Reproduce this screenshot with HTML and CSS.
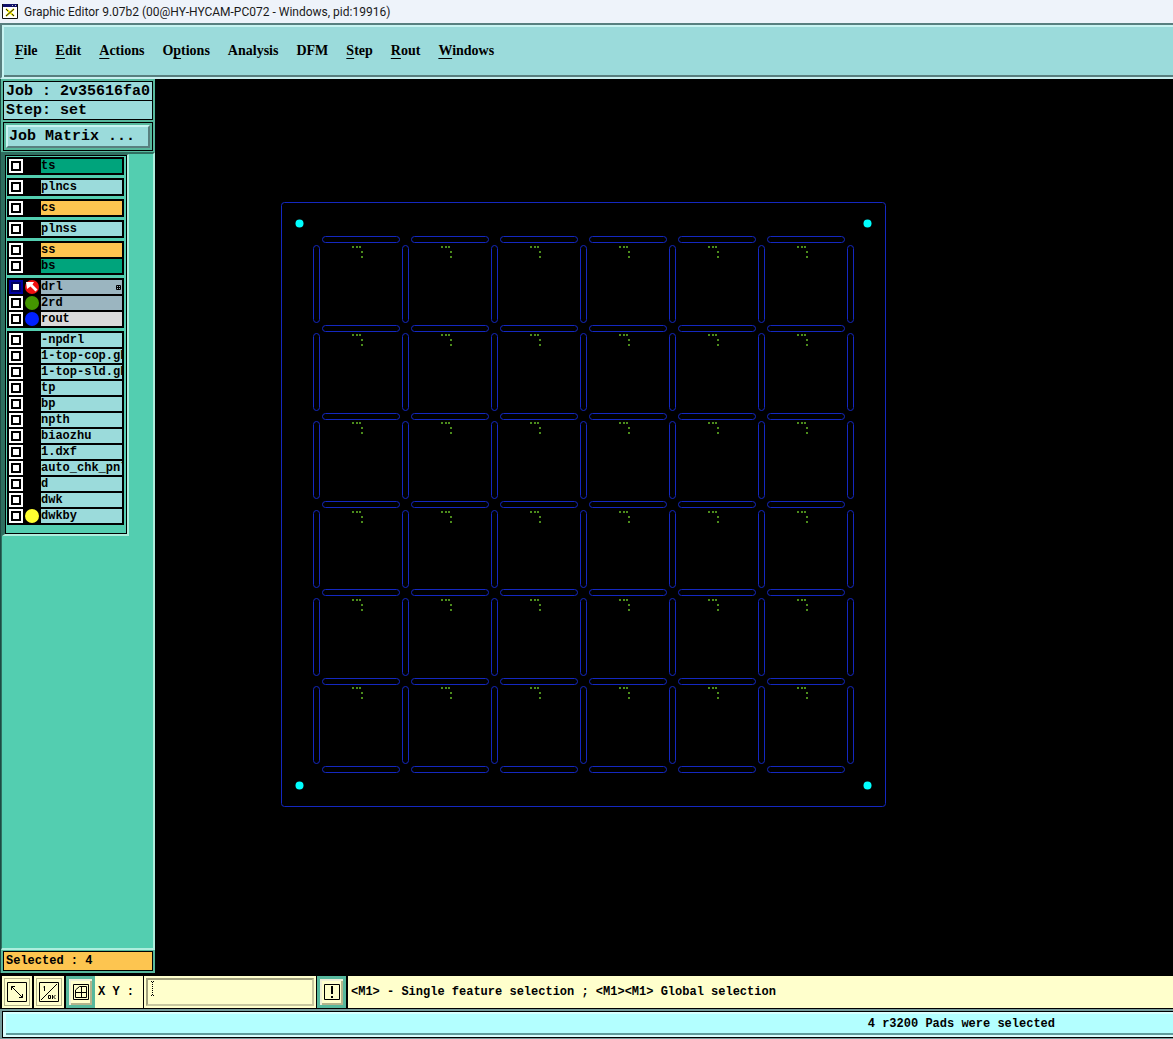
FILE: index.html
```html
<!DOCTYPE html>
<html lang="en">
<head>
<meta charset="utf-8">
<title>Graphic Editor 9.07b2</title>
<link rel="stylesheet" href="styles.css">
</head>
<body>
<header class="titlebar">
  <svg class="app-icon" width="16" height="15" viewBox="0 0 16 15" aria-hidden="true">
    <path fill="#fff" d="M0 0h16v15H0z"/>
    <path fill="#10106a" d="M0 0h16v3H0z"/>
    <path fill="#ccc" d="M10 1h1v1h-1zM13 1h1v1h-1z"/>
    <path fill="none" stroke="#111" d="M.5 0v14.500h15V0"/>
    <path fill="none" stroke="#e8e000" stroke-width="2" d="M4 5l8 7M12 5l-8 7"/>
    <path fill="none" stroke="#222" d="M4 5l2 2M12 5l-8 7M10 10l2 2"/>
  </svg>
  <span>Graphic Editor 9.07b2 (00@HY-HYCAM-PC072 - Windows, pid:19916)</span>
</header>

<nav class="menubar">
  <button class="menu"><u>F</u>ile</button>
  <button class="menu"><u>E</u>dit</button>
  <button class="menu"><u>A</u>ctions</button>
  <button class="menu">O<u>p</u>tions</button>
  <button class="menu">Analysis</button>
  <button class="menu">DFM</button>
  <button class="menu"><u>S</u>tep</button>
  <button class="menu"><u>R</u>out</button>
  <button class="menu"><u>W</u>indows</button>
</nav>

<main class="workspace">
  <aside class="sidebar">
    <div class="job-info">
      <div class="info-line">Job : 2v35616fa0</div>
      <div class="info-line">Step: set</div>
    </div>
    <div class="matrix-frame"><button class="matrix-button">Job Matrix ...</button></div>
    <div class="layer-area">
      <div class="layer-panel">
        <div class="layer-list">
          <div class="group">
            <label class="layer mask"><input type="checkbox"><i class="swatch"></i><span class="name">ts</span></label>
          </div>
          <div class="group">
            <label class="layer"><input type="checkbox"><i class="swatch"></i><span class="name">plncs</span></label>
          </div>
          <div class="group">
            <label class="layer signal"><input type="checkbox"><i class="swatch"></i><span class="name">cs</span></label>
          </div>
          <div class="group">
            <label class="layer"><input type="checkbox"><i class="swatch"></i><span class="name">plnss</span></label>
          </div>
          <div class="group">
            <label class="layer signal"><input type="checkbox"><i class="swatch"></i><span class="name">ss</span></label>
            <label class="layer mask"><input type="checkbox"><i class="swatch"></i><span class="name">bs</span></label>
          </div>
          <div class="group">
            <label class="layer drill"><input type="checkbox" checked><i class="swatch red"><svg width="14" height="14" viewBox="0 0 14 14"><path fill="#fff" d="M1 2h8L7.500 4.500l5 5-2 2-5-5L2 9z"/></svg></i><span class="name">drl</span><svg class="matrix-mark" width="5" height="5" viewBox="0 0 5 5"><path fill="none" stroke="#000" d="M.5.5h4v4h-4zM2.500 0v5M0 2.500h5"/></svg></label>
            <label class="layer drill"><input type="checkbox"><i class="swatch green"></i><span class="name">2rd</span></label>
            <label class="layer rout"><input type="checkbox"><i class="swatch blue"></i><span class="name">rout</span></label>
          </div>
          <div class="group">
            <label class="layer"><input type="checkbox"><i class="swatch"></i><span class="name">-npdrl</span></label>
            <label class="layer"><input type="checkbox"><i class="swatch"></i><span class="name">1-top-cop.gb</span></label>
            <label class="layer"><input type="checkbox"><i class="swatch"></i><span class="name">1-top-sld.gb</span></label>
            <label class="layer"><input type="checkbox"><i class="swatch"></i><span class="name">tp</span></label>
            <label class="layer"><input type="checkbox"><i class="swatch"></i><span class="name">bp</span></label>
            <label class="layer"><input type="checkbox"><i class="swatch"></i><span class="name">npth</span></label>
            <label class="layer"><input type="checkbox"><i class="swatch"></i><span class="name">biaozhu</span></label>
            <label class="layer"><input type="checkbox"><i class="swatch"></i><span class="name">1.dxf</span></label>
            <label class="layer"><input type="checkbox"><i class="swatch"></i><span class="name">auto_chk_pnl</span></label>
            <label class="layer"><input type="checkbox"><i class="swatch"></i><span class="name">d</span></label>
            <label class="layer"><input type="checkbox"><i class="swatch"></i><span class="name">dwk</span></label>
            <label class="layer"><input type="checkbox"><i class="swatch yellow"></i><span class="name">dwkby</span></label>
          </div>
        </div>
      </div>
    </div>
    <div class="selected-frame"><div class="selected">Selected : 4</div></div>
  </aside>

  <section class="canvas">
    <svg width="605" height="605" viewBox="281 202 605 605" role="img" aria-label="Panel with six by six boards">
      <defs>
        <rect id="h" x="322.500" y=".5" width="77" height="6" rx="3"/>
        <rect id="v" x="313.500" y="245.500" width="6" height="77" rx="3"/>
        <g id="hrow"><use href="#h"/><use href="#h" x="89"/><use href="#h" x="178"/><use href="#h" x="267"/><use href="#h" x="356"/><use href="#h" x="445"/></g>
        <g id="vrow"><use href="#v"/><use href="#v" x="89"/><use href="#v" x="178"/><use href="#v" x="267"/><use href="#v" x="356"/><use href="#v" x="445"/><use href="#v" x="534"/></g>
        <path id="d" d="M352 246h2v2h-2zM356 246h2v2h-2zM359 246h2v2h-2zM361 251h2v2h-2zM361 256h2v2h-2z"/>
        <g id="drow"><use href="#d"/><use href="#d" x="89"/><use href="#d" x="178"/><use href="#d" x="267"/><use href="#d" x="356"/><use href="#d" x="445"/></g>
      </defs>
      <g class="outline">
        <rect x="281.500" y="202.500" width="604" height="604" rx="3"/>
        <use href="#hrow" y="236"/><use href="#hrow" y="325"/><use href="#hrow" y="413"/><use href="#hrow" y="501"/><use href="#hrow" y="589"/><use href="#hrow" y="678"/><use href="#hrow" y="766"/>
        <use href="#vrow"/><use href="#vrow" y="88"/><use href="#vrow" y="176"/><use href="#vrow" y="265"/><use href="#vrow" y="353"/><use href="#vrow" y="441"/>
      </g>
      <g class="holes">
        <use href="#drow"/><use href="#drow" y="88"/><use href="#drow" y="176"/><use href="#drow" y="265"/><use href="#drow" y="353"/><use href="#drow" y="441"/>
      </g>
      <g class="pads">
        <circle cx="299.500" cy="223.500" r="4"/><circle cx="867.500" cy="223.500" r="4"/>
        <circle cx="299.500" cy="785.500" r="4"/><circle cx="867.500" cy="785.500" r="4"/>
      </g>
    </svg>
  </section>
</main>

<div class="toolbar">
  <button class="tool" aria-label="Zoom extents"><svg width="20" height="20" viewBox="0 0 20 20"><path d="M.5.5h19v19H.5zM4.500 8V4.500H8M4.500 4.500l11 11M15.500 12v3.500H12"/></svg></button>
  <button class="tool" aria-label="Scale"><svg width="20" height="20" viewBox="0 0 20 20"><path d="M.5.5h19v19H.5zM2 18L18 2M5.500 4v5M4.500 5h1M9.500 13.500h2v3h-2zM13.500 13v4M16.500 13l-2 2 2 2"/></svg></button>
  <button class="tool active" aria-label="Grid"><svg width="16" height="16" viewBox="0 0 16 16"><path d="M.5.5h15v15H.5zM2.500 13.500V6l4-3.500h7v11zM8.500 2.500v11M2.500 8.500h11"/></svg></button>
  <label class="xy-label" for="xy">X Y :</label>
  <div class="xy-frame">
    <input class="xy" id="xy" type="text">
    <svg class="caret" width="3" height="15" viewBox="0 0 3 15" aria-hidden="true"><path fill="none" stroke="#000" stroke-dasharray="1 1" d="M1.500 1v13M0 .5h3M0 14.500h3"/></svg>
  </div>
  <button class="tool active" aria-label="Interrupt"><svg width="16" height="16" viewBox="0 0 16 16"><path d="M.5.5h15v15H.5z"/><path class="bang" d="M8 2v8M8 12v2"/></svg></button>
  <div class="message">&lt;M1&gt; - Single feature selection ; &lt;M1&gt;&lt;M1&gt; Global selection</div>
</div>

<footer class="status"><div class="status-box"><div class="status-text">4 r3200 Pads were selected</div></div></footer>
</body>
</html>
```
FILE: styles.css
```css
* { box-sizing: border-box; }

body {
  margin: 0;
  min-height: 100vh;
  display: flex;
  flex-direction: column;
  background: #000;
  color: #000;
  font: bold 12px/14px "Liberation Mono", "Courier New", monospace;
}

button { font: inherit; color: inherit; margin: 0; padding: 0; border: 0; background: none; }

.titlebar {
  display: flex;
  align-items: center;
  gap: 6px;
  height: 23px;
  padding-left: 2px;
  background: #eef3fa;
  color: #1a1a1a;
  font: 12px/16px Roboto, "Segoe UI", sans-serif;
  white-space: nowrap;
}

.menubar {
  display: flex;
  align-items: center;
  gap: 18px;
  height: 56px;
  padding-left: 13px;
  background: #9bdbdb;
  border: solid;
  border-width: 2px 0 2px 2px;
  border-color: #587f7f #587f7f #c8f0f0 #587f7f;
  box-shadow: inset 2px 2px #c8f4f2, inset 0 -2px #587f7f;
  font: bold 14px/18px "Liberation Serif", "Times New Roman", serif;
}
.menu u { text-underline-offset: 3px; text-decoration-thickness: 1px; text-decoration-skip-ink: none; }

.workspace { flex: 1; display: flex; }

.sidebar {
  width: 155px;
  flex: none;
  display: flex;
  flex-direction: column;
  margin-bottom: 2px;
  border-left: 1px solid #1d4a42;
  background: #57b89d;
}
.job-info { padding: 2px 2px 0; font-size: 15px; line-height: 20px; }
.info-line {
  height: 20px;
  padding-left: 2px;
  border: 1px solid #000;
  background: #9bdbdb;
  white-space: nowrap;
}
.info-line + .info-line { margin-top: -1px; }
.matrix-frame { margin: 2px 2px 1px; padding: 2px; border: 1px solid #000; }
.matrix-button {
  display: block;
  width: 100%;
  height: 23px;
  padding-left: 1px;
  border: 2px solid;
  border-color: #c8f4f2 #587f7f #587f7f #c8f4f2;
  background: #9bdbdb;
  font-size: 15px;
  line-height: 18px;
  text-align: left;
}

.layer-area {
  flex: 1;
  border: solid;
  border-width: 2px 2px 2px 1px;
  border-color: #2f6f60 #aeeedd #aeeedd #2f6f60;
  background: #53ceb0;
}
.layer-panel {
  width: 127px;
  border: solid;
  border-width: 1px 2px 2px 3px;
  border-color: #2f6f60 #aeeedd #aeeedd #2f6f60;
}
.layer-list {
  display: flex;
  flex-direction: column;
  gap: 3px;
  padding: 1px 2px 8px 1px;
  border: 1px solid #000;
}
.group { display: flex; flex-direction: column; gap: 2px; padding: 2px; background: #000; }
.layer {
  position: relative;
  display: grid;
  grid-template-columns: 14px 14px 1fr;
  column-gap: 2px;
  height: 14px;
}
.layer input {
  appearance: none;
  width: 14px;
  height: 14px;
  margin: 0;
  border: 2px solid #fff;
  background: #fff;
  box-shadow: inset 0 0 0 2px #000;
}
.layer input:checked { border-color: #0000a0; box-shadow: inset 0 0 0 2px #00005c; }
.swatch { width: 14px; height: 14px; border-radius: 50%; }
.swatch svg { display: block; }
.red { background: #f01010; }
.green { background: #449600; }
.blue { background: #0020ff; }
.yellow { background: #ffff30; }
.name {
  min-width: 0;
  overflow: hidden;
  background: #9bdbdb;
  white-space: nowrap;
}
.mask .name { background: #00a47c; }
.signal .name { background: #fdc550; }
.drill .name { background: #9bb5c0; }
.rout .name { background: #dadada; }
.matrix-mark { position: absolute; right: 1px; top: 5px; }

.selected-frame { padding: 1px 2px 2px; }
.selected {
  height: 20px;
  padding-left: 2px;
  border: 1px solid #000;
  background: #fdc550;
  line-height: 19px;
}

.canvas { flex: 1; min-width: 0; padding: 123px 0 0 126px; overflow: hidden; }
.canvas svg { display: block; }
.outline { fill: none; stroke: #1428c0; }
.holes { fill: #4c8c1c; }
.pads { fill: #00ffff; }

.toolbar {
  display: flex;
  align-items: stretch;
  height: 34px;
  padding-left: 2px;
  border-top: 1px solid #000;
  border-bottom: 1px solid #000;
  background: #000;
}
.tool {
  width: 30px;
  flex: none;
  display: grid;
  place-items: center;
  margin-right: 2px;
  border: 2px solid #ffffcc;
  background: #ffffcc;
  box-shadow: inset 0 0 0 1px #b4b48c;
}
.tool.active {
  width: 29px;
  margin-right: 0;
  border: 3px solid #57b89d;
  box-shadow: inset 2px 2px #f0f0d8, inset -2px -2px #b4b48c;
}
.tool svg { display: block; fill: none; stroke: #000; }
.tool .bang { stroke-width: 2; }
.xy-label { width: 48px; flex: none; padding-left: 3px; background: #ffffcc; line-height: 32px; white-space: nowrap; }
.xy-frame {
  position: relative;
  width: 172px;
  flex: none;
  margin: 0 1px;
  padding: 2px;
  background: #ffffcc;
}
.xy {
  display: block;
  width: 100%;
  height: 28px;
  margin: 0;
  padding: 0 8px;
  border: 2px solid;
  border-color: #a0a07c #c8c8a0 #c8c8a0 #a0a07c;
  background: #ffffcc;
  font: inherit;
}
.caret { position: absolute; left: 7px; top: 5px; }
.message {
  flex: 1;
  min-width: 0;
  margin-left: 2px;
  padding-left: 3px;
  overflow: hidden;
  background: #ffffcc;
  line-height: 32px;
  white-space: nowrap;
}

.status {
  height: 30px;
  padding: 2px 0 1px 2px;
  background: #779c9c;
}
.status-box {
  height: 27px;
  padding: 2px 0 2px 3px;
  border: 1px solid #000;
  border-right: 0;
  background: #d8ffff;
}
.status-text {
  height: 21px;
  padding-right: 118px;
  border-bottom: 2px solid #5f9c9c;
  background: #b3ffff;
  line-height: 21px;
  text-align: right;
  white-space: nowrap;
}
```
